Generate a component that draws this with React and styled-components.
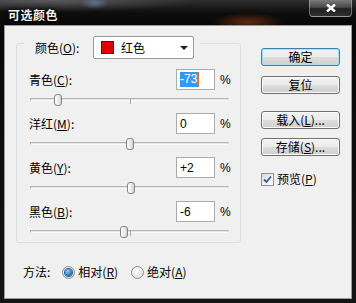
import styled, { createGlobalStyle } from "styled-components";

const GlobalStyle = createGlobalStyle`
  html, body {
    margin: 0;
    padding: 0;
    background: #0b0b0b;
  }
  body {
    font-family: "Liberation Sans", "Noto Sans CJK SC", sans-serif;
    font-size: 12px;
    color: #000;
  }
`;

const Window = styled.div`
  width: 356px;
  height: 303px;
  box-sizing: border-box;
  display: flex;
  flex-direction: column;
  padding: 0 4px 4px 4px;
  background:
    radial-gradient(ellipse 36px 9px at 248px 22px, rgba(170, 70, 25, 0.55), transparent),
    radial-gradient(ellipse 14px 6px at 95px 3px, rgba(110, 140, 190, 0.6), transparent),
    radial-gradient(ellipse 150px 12px at 50px 0px, rgba(130, 130, 135, 0.55), transparent),
    linear-gradient(#2e2e2e, #0d0d0d 13px, #070707 25px, #141414);
`;

const TitleBar = styled.div`
  height: 25px;
  display: flex;
  align-items: flex-start;
  justify-content: space-between;
`;

const Title = styled.div`
  padding: 8px 0 0 4px;
  font-family: "Noto Sans CJK SC", sans-serif;
  font-size: 12px;
  line-height: 13px;
  font-weight: bold;
  letter-spacing: 0.5px;
  color: #f2f2f2;
  text-shadow: 0 0 3px #000, 1px 1px 1px #000, 0 0 6px rgba(0, 0, 0, 0.9);
`;

const CloseButton = styled.div`
  width: 43px;
  height: 17px;
  box-sizing: border-box;
  display: flex;
  align-items: center;
  justify-content: center;
  border: 1px solid rgba(200, 200, 200, 0.45);
  border-top: none;
  border-radius: 0 0 4px 4px;
  background: linear-gradient(#7a7a7a, #4a4a4a 45%, #202020 55%, #303030);
`;

const Client = styled.div`
  flex: 1;
  display: flex;
  background: #f0f0f0;
  border: 1px solid #9a9a9a;
`;

const Main = styled.div`
  padding: 17px 0 0 11px;
  display: flex;
  flex-direction: column;
`;

const GroupBox = styled.div`
  position: relative;
  width: 225px;
  height: 200px;
  box-sizing: border-box;
  border: 1px solid #d5dfe5;
  border-radius: 3px;
  padding: 25px 10px 0 12px;
  display: flex;
  flex-direction: column;
`;

const Legend = styled.div`
  position: absolute;
  top: -8px;
  left: 7px;
  width: 176px;
  height: 23px;
  box-sizing: border-box;
  padding: 0 6px 0 11px;
  display: flex;
  align-items: center;
  justify-content: space-between;
  background: #f0f0f0;
`;

const Text = styled.span`
  font-family: "Noto Sans CJK SC", sans-serif;
  font-size: 12px;
  line-height: 16px;
  white-space: nowrap;
`;

const Select = styled.div`
  width: 101px;
  height: 23px;
  box-sizing: border-box;
  display: flex;
  align-items: center;
  padding: 0 5px 0 7px;
  background: #fff;
  border: 1px solid #9b9b9b;
  border-radius: 2px;
`;

const Swatch = styled.div`
  width: 13px;
  height: 13px;
  box-sizing: border-box;
  background: ${(p) => p.$color};
  border: 1px solid #5a1010;
  margin-right: 7px;
`;

const Caret = styled.div`
  margin-left: auto;
  width: 0;
  height: 0;
  border-left: 4px solid transparent;
  border-right: 4px solid transparent;
  border-top: 4px solid #1c1c3a;
`;

const Row = styled.div`
  display: flex;
  flex-direction: column;
`;

const Head = styled.div`
  height: 21px;
  display: flex;
  align-items: center;
`;

const Field = styled.div`
  width: 39px;
  height: 21px;
  box-sizing: border-box;
  margin-left: auto;
  padding: 0 0 0 3px;
  display: flex;
  align-items: center;
  background: #fff;
  border: 1px solid #a9abaf;
  font-size: 12px;
`;

const Selected = styled.span`
  background: #3399ff;
  color: #fff;
  line-height: 15px;
  padding: 0 1px 0 0;
  border-right: 1px solid #e07020;
`;

const Percent = styled.span`
  margin-left: 5px;
  width: 10px;
  font-size: 12px;
`;

const TrackArea = styled.div`
  height: 23px;
  box-sizing: border-box;
  padding: 8px 1px 0;
`;

const Track = styled.div`
  position: relative;
  height: 3px;
  box-sizing: border-box;
  border: 1px solid #b4b4b4;
  border-bottom-color: #fafafa;
  border-right-color: #e0e0e0;
  background: #e4e4e4;
`;

const Tick = styled.div`
  position: absolute;
  left: 50%;
  top: -1px;
  width: 1px;
  height: 6px;
  background: #a8a8a8;
`;

const Thumb = styled.div`
  position: absolute;
  top: 50%;
  width: 8px;
  height: 12px;
  box-sizing: border-box;
  transform: translate(-50%, -50%);
  border: 1px solid #858585;
  border-radius: 3px;
  background: linear-gradient(90deg, #fefefe, #e8e8e8 60%, #cfcfcf);
`;

const MethodRow = styled.div`
  margin-top: 21px;
  padding-left: 7px;
  height: 16px;
  display: flex;
  align-items: center;
`;

const Radio = styled.div`
  width: 13px;
  height: 13px;
  box-sizing: border-box;
  margin-left: ${(p) => p.$gap}px;
  margin-right: 3px;
  border-radius: 50%;
  border: 1px solid #8e8f8f;
  display: flex;
  align-items: center;
  justify-content: center;
  background: radial-gradient(circle at 40% 35%, #ffffff, #e0e0e0 70%, #c9c9c9);

  &::after {
    content: "";
    display: ${(p) => (p.$checked ? "block" : "none")};
    width: 7px;
    height: 7px;
    border-radius: 50%;
    background: radial-gradient(circle at 40% 35%, #8fd0ff, #2a7fc0 55%, #0f4b7d);
    box-shadow: 0 0 0 1px #1d5c8c;
  }
`;

const Side = styled.div`
  margin-left: auto;
  padding: 22px 11px 0 0;
  display: flex;
  flex-direction: column;
`;

const Button = styled.div`
  width: 79px;
  height: 18px;
  box-sizing: border-box;
  margin-top: ${(p) => p.$gap || 0}px;
  display: flex;
  align-items: center;
  justify-content: center;
  border: 1px solid ${(p) => (p.$primary ? "#3c7fb1" : "#707070")};
  border-radius: 3px;
  background: linear-gradient(#f2f2f2, #ebebeb 50%, #dddddd 51%, #cfcfcf);
  box-shadow: ${(p) => (p.$primary ? "inset 0 0 0 1px #a6e0f5" : "inset 0 0 0 1px #fbfbfb")};
  font-family: "Noto Sans CJK SC", sans-serif;
  font-size: 12px;
  line-height: 14px;
`;

const CheckRow = styled.div`
  margin-top: 15px;
  display: flex;
  align-items: center;
  gap: 3px;
`;

const CheckBox = styled.div`
  width: 13px;
  height: 13px;
  box-sizing: border-box;
  border: 1px solid #8e8f8f;
  background: linear-gradient(135deg, #dcdcdc, #ffffff);
  display: flex;
  align-items: center;
  justify-content: center;
`;

const Key = styled.span`
  text-decoration: underline;
`;

const rows = [
  { name: "青色", key: "C", value: -73, selected: true },
  { name: "洋红", key: "M", value: 0 },
  { name: "黄色", key: "Y", value: 2 },
  { name: "黑色", key: "B", value: -6 },
];

const formatValue = (v) => (v > 0 ? `+${v}` : `${v}`);

export default function App() {
  return (
    <>
      <GlobalStyle />
      <Window>
        <TitleBar>
          <Title>可选颜色</Title>
          <CloseButton>
            <svg width="10" height="8" viewBox="0 0 10 8">
              <path d="M1 0.5 L9 7.5 M9 0.5 L1 7.5" stroke="#fff" strokeWidth="2.4" />
            </svg>
          </CloseButton>
        </TitleBar>
        <Client>
          <Main>
            <GroupBox>
              <Legend>
                <Text>
                  颜色(<Key>O</Key>):
                </Text>
                <Select>
                  <Swatch $color="#e00000" />
                  <Text>红色</Text>
                  <Caret />
                </Select>
              </Legend>
              {rows.map((r) => (
                <Row key={r.key}>
                  <Head>
                    <Text>
                      {r.name}(<Key>{r.key}</Key>):
                    </Text>
                    <Field>
                      {r.selected ? (
                        <Selected>{formatValue(r.value)}</Selected>
                      ) : (
                        formatValue(r.value)
                      )}
                    </Field>
                    <Percent>%</Percent>
                  </Head>
                  <TrackArea>
                    <Track>
                      <Tick />
                      <Thumb style={{ left: `${((r.value + 100) / 200) * 100}%` }} />
                    </Track>
                  </TrackArea>
                </Row>
              ))}
            </GroupBox>
            <MethodRow>
              <Text>方法:</Text>
              <Radio $gap={12} $checked />
              <Text>
                相对(<Key>R</Key>)
              </Text>
              <Radio $gap={13} />
              <Text>
                绝对(<Key>A</Key>)
              </Text>
            </MethodRow>
          </Main>
          <Side>
            <Button $primary>确定</Button>
            <Button $gap={10}>复位</Button>
            <Button $gap={17}>
              载入(<Key>L</Key>)...
            </Button>
            <Button $gap={9}>
              存储(<Key>S</Key>)...
            </Button>
            <CheckRow>
              <CheckBox>
                <svg width="9" height="9" viewBox="0 0 9 9">
                  <path
                    d="M1 4.5 L3.5 7 L8 1.5"
                    fill="none"
                    stroke="#3b5a9a"
                    strokeWidth="1.8"
                  />
                </svg>
              </CheckBox>
              <Text>
                预览(<Key>P</Key>)
              </Text>
            </CheckRow>
          </Side>
        </Client>
      </Window>
    </>
  );
}
